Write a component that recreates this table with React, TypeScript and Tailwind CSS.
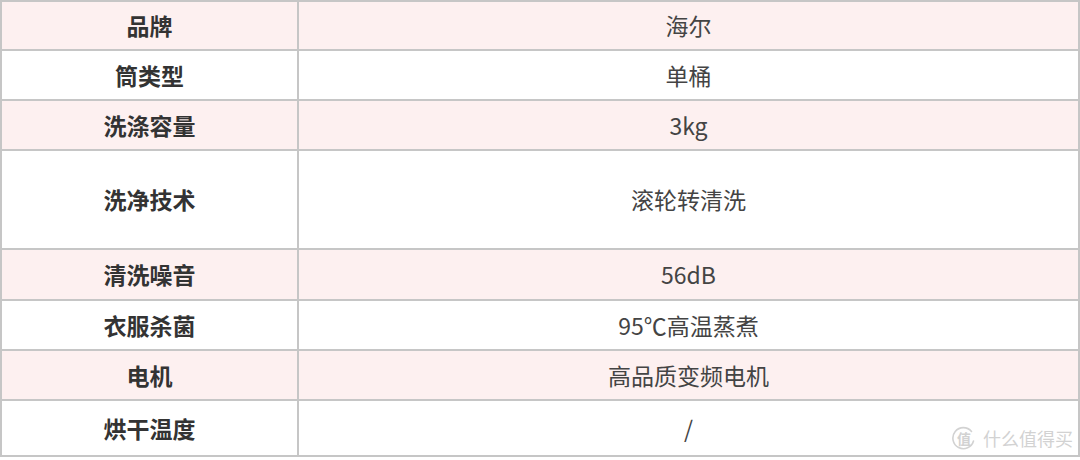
const rows = [
  { label: "品牌", value: "海尔", h: "h-[49px]", pink: true },
  { label: "筒类型", value: "单桶", h: "h-[50px]", pink: false },
  { label: "洗涤容量", value: "3kg", h: "h-[50px]", pink: true },
  { label: "洗净技术", value: "滚轮转清洗", h: "h-[99px]", pink: false },
  { label: "清洗噪音", value: "56dB", h: "h-[51px]", pink: true },
  { label: "衣服杀菌", value: "95℃高温蒸煮", h: "h-[50px]", pink: false },
  { label: "电机", value: "高品质变频电机", h: "h-[50px]", pink: true },
  { label: "烘干温度", value: "/", h: "h-[56px]", pink: false },
];

function Watermark() {
  return (
    <div className="absolute left-[952px] top-[426px] flex items-center gap-[7px] text-[#d2d2d2]">
      <div className="relative w-[24px] h-[24px] flex items-center justify-center">
        <svg width="24" height="24" viewBox="0 0 24 24" className="absolute inset-0">
          <path
            d="M19.5 5.5 A10.5 10.5 0 1 0 21.5 15"
            fill="none"
            stroke="#d2d2d2"
            strokeWidth="1.6"
            strokeLinecap="round"
          />
        </svg>
        <span className="text-[14px] leading-none font-bold">值</span>
      </div>
      <span className="text-[18px] leading-none tracking-[0px]">什么值得买</span>
    </div>
  );
}

export default function App() {
  return (
    <div
      className="relative w-[1080px] h-[460px] bg-white overflow-hidden"
      style={{ fontFamily: '"Noto Sans CJK SC", "Noto Sans", sans-serif' }}
    >
      <div className="w-[1080px] border-t-2 border-l-2 border-r-2 border-[#c6c6c6]">
        {rows.map((row) => (
          <div
            key={row.label}
            className={`flex border-b-2 border-[#c6c6c6] ${row.h} ${row.pink ? "bg-[#fdf0f0]" : "bg-white"}`}
          >
            <div className="w-[297px] shrink-0 border-r-2 border-[#c6c6c6] flex items-center justify-center text-[23px] font-bold text-[#333333]">
              {row.label}
            </div>
            <div className="flex-1 flex items-center justify-center text-[23px] text-[#444444]">
              {row.value}
            </div>
          </div>
        ))}
      </div>
      <Watermark />
    </div>
  );
}
